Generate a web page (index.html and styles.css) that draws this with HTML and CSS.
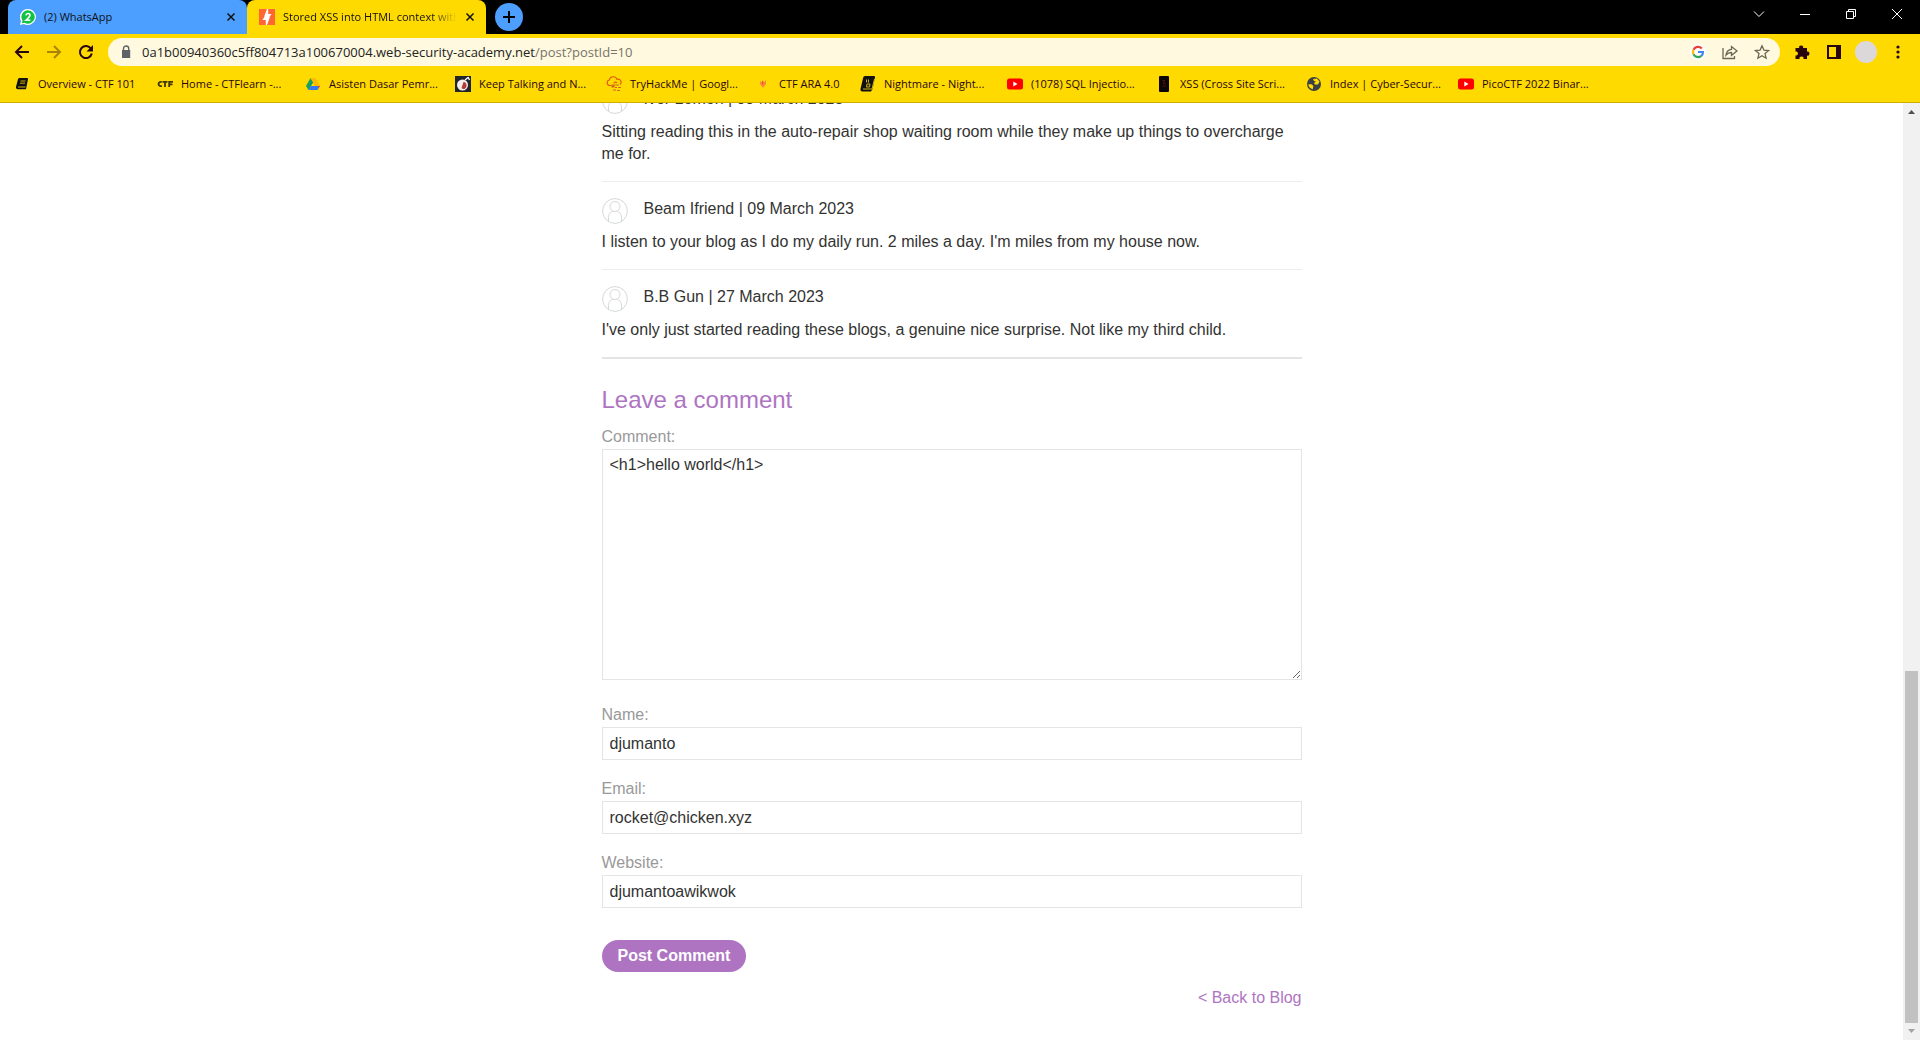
FILE: index.html
```html
<!DOCTYPE html>
<html lang="en">
<head>
<meta charset="utf-8">
<title>Stored XSS into HTML context with nothing encoded</title>
<link rel="stylesheet" href="styles.css">
</head>
<body>
<header class="chrome">
  <div class="tabstrip">
    <div class="tab tab-idle">
      <svg class="icon16" viewBox="0 0 16 16"><path d="M8 0a8 8 0 1 1-4 15L0 16l1-4A8 8 0 0 1 8 0z" fill="#fff"/><path d="M8 1.300a6.700 6.700 0 1 1-3.500 12.400L1.800 14.300l.7-2.700A6.700 6.700 0 0 1 8 1.300z" fill="#12c245"/><path d="M5.900 6.300Q6.100 4.500 8 4.500t2 1.800Q10 7.500 6 11.300h4.300" fill="none" stroke="#fff" stroke-width="1.600"/></svg>
      <span class="tab-title">(2) WhatsApp</span>
      <button class="tab-close" aria-label="Close tab"><svg viewBox="0 0 10 10"><path d="M1.500 1.500l7 7M8.500 1.500l-7 7"/></svg></button>
    </div>
    <div class="tab tab-active">
      <svg class="icon16" viewBox="0 0 16 16"><path d="M0 0h16v16H0z" fill="#ff6633"/><path d="M9.200 0v5h3.300L9 10.300V8.300H6L5.200 7.500 8 0zM6.800 16v-5H3.500L6.700 5.800 7 7.700h3l.8.8L8 16z" fill="#fff"/></svg>
      <span class="tab-title">Stored XSS into HTML context with</span>
      <button class="tab-close" aria-label="Close tab"><svg viewBox="0 0 10 10"><path d="M1.500 1.500l7 7M8.500 1.500l-7 7"/></svg></button>
    </div>
    <button class="new-tab" aria-label="New tab"><svg viewBox="0 0 12 12"><path d="M6 0v12M0 6h12"/></svg></button>
    <div class="window-buttons">
      <button aria-label="Search tabs"><svg viewBox="0 0 10 10"><path d="M0 2.500l5 5 5-5"/></svg></button>
      <button aria-label="Minimize"><svg viewBox="0 0 10 10"><path d="M0 5.500h10"/></svg></button>
      <button aria-label="Restore"><svg viewBox="0 0 10 10"><path d="M.5 2.500h7v7h-7zM2.500 2.500v-2h7v7h-2"/></svg></button>
      <button aria-label="Close"><svg viewBox="0 0 10 10"><path d="M0 0l10 10M10 0L0 10"/></svg></button>
    </div>
  </div>
  <div class="toolbar">
    <button class="tool" aria-label="Back"><svg class="icon16" viewBox="0 0 16 16"><path d="M15 8H2.500M8 2L2 8l6 6" class="ln"/></svg></button>
    <button class="tool tool-off" aria-label="Forward"><svg class="icon16" viewBox="0 0 16 16"><path d="M1 8h12.500M8 2l6 6-6 6" class="ln"/></svg></button>
    <button class="tool" aria-label="Reload"><svg class="icon16" viewBox="0 0 16 16"><path d="M13 4.800A6 6 0 1 0 13.800 9.500" class="ln"/><path d="M15 1v6.500H8.500z" fill="#28060f"/></svg></button>
    <div class="omnibox">
      <svg class="icon16" viewBox="0 0 16 16"><path d="M4 6h8.200v8H4z" fill="#5f6368"/><path d="M5.500 6.500V4.600a2.600 2.600 0 0 1 5.200 0v1.900" fill="none" stroke="#5f6368" stroke-width="1.400"/></svg>
      <span class="url">0a1b00940360c5ff804713a100670004.web-security-academy.net<span class="path">/post?postId=10</span></span>
      <button class="tool" aria-label="Google"><svg class="icon16" viewBox="0 0 16 16"><circle cx="8" cy="8" r="8" fill="#fff"/><g fill="none" stroke-width="2.200"><path d="M11.800 4.600A5 5 0 0 0 3.500 5.800" stroke="#ea4335"/><path d="M3.500 5.800a5 5 0 0 0 0 4.400" stroke="#fbbc05"/><path d="M3.500 10.200a5 5 0 0 0 7.800 1.600" stroke="#34a853"/><path d="M11.300 11.800A5 5 0 0 0 13 8H8" stroke="#4285f4"/></g></svg></button>
      <button class="tool" aria-label="Share"><svg class="icon16" viewBox="0 0 16 16"><path d="M1 4v10.500h11.500V12M4 11c.5-4 2.500-5.500 5.500-5.700V2.500L15 7l-5.500 4.300V8.500C7 8.500 5.500 9 4 11z" class="thin"/></svg></button>
      <button class="tool" aria-label="Bookmark"><svg class="icon16" viewBox="0 0 16 16"><path d="M8 1.800l1.900 4.300 4.700.4-3.600 3.100 1.100 4.600L8 11.700l-4.100 2.500L5 9.600 1.400 6.500l4.700-.4z" class="thin"/></svg></button>
    </div>
    <button class="tool" aria-label="Extensions"><svg class="icon16" viewBox="0 0 16 16"><path d="M1.500 4h3.700a2 2 0 1 1 3.900 0H13v3.700a2 2 0 1 1 0 3.900V15H9.500a2 2 0 1 0-3.900 0H1.500v-3.500a2 2 0 1 0 0-3.900z" fill="#28060f"/></svg></button>
    <button class="tool" aria-label="Side panel"><svg class="icon16" viewBox="0 0 16 16"><path d="M1 1h14v14H1zM3 3v10h7V3z" fill="#28060f" fill-rule="evenodd"/></svg></button>
    <button class="tool" aria-label="Profile"><span class="profile"></span></button>
    <button class="tool" aria-label="Menu"><svg class="icon16" viewBox="0 0 16 16"><g fill="#28060f"><circle cx="8" cy="3" r="1.600"/><circle cx="8" cy="8" r="1.600"/><circle cx="8" cy="13" r="1.600"/></g></svg></button>
  </div>
  <nav class="bookmarks">
    <a href="#"><svg class="icon16" viewBox="0 0 16 16"><path d="M5.500 2h7.800q1 0 .7 1l-2 10.300H4Q1.600 13.200 2 10.800L4 3.200Q4.400 2 5.500 2z" fill="#111"/><path d="M6.500 5h5M6 7.200h5M4 11h7.500" stroke="#ffda00" fill="none" stroke-width=".8"/></svg><span>Overview - CTF 101</span></a>
    <a href="#"><svg class="icon16" viewBox="0 0 16 16"><g fill="none" stroke="#40350b" stroke-width="1.800"><path d="M4.800 6.200A2.100 2.100 0 1 0 4.800 9.800M5.500 5.800h5M8 5.500v5.500M12.200 11V5.900H16M12 8.300h3.500"/></g></svg><span>Home - CTFlearn -...</span></a>
    <a href="#"><svg class="icon16" viewBox="0 0 16 16"><path d="M5.500 2L1 10l2.500 4 5-8z" fill="#15a05f"/><path d="M5.500 2h5L15 10h-5z" fill="#ffba00"/><path d="M3.500 14l2.300-4H15l-2.500 4z" fill="#3678f4"/><path d="M12.600 10H15l-1.200 2z" fill="#ea4335"/></svg><span>Asisten Dasar Pemr...</span></a>
    <a href="#"><svg class="icon16" viewBox="0 0 16 16"><path d="M0 0h16v16H0z" fill="#20242b"/><circle cx="7.500" cy="9" r="5.500" fill="#f2eeee"/><path d="M8.500 6a3 3.500 0 1 1-2 6z" fill="#b53b34"/><path d="M10 4l3-2.500M13 1l1.500 3" stroke="#fff" stroke-width="1.300"/></svg><span>Keep Talking and N...</span></a>
    <a href="#"><svg class="icon16" viewBox="0 0 16 16"><path d="M5 9.500H3.500a2.800 2.800 0 0 1-.2-5.500A4 4 0 0 1 11 3.400a3 3 0 0 1 3 5.100M11 7c-1-1.500-3-1-3 .5" fill="none" stroke="#df5a15" stroke-width="1.200"/><path d="M6 9h2v2H6zM9 9h4M9 11.500h2M12 11.500h3M7 14h3M11 14.500h3" stroke="#d26724" fill="#d26724" stroke-width="1.200"/></svg><span>TryHackMe | Googl...</span></a>
    <a href="#"><svg class="icon16" viewBox="0 0 16 16"><path d="M5 5l3 2 3-3v4L8 12 5 8z" fill="#ff8538"/><path d="M7 4l2 3-2 2z" fill="#e5543d"/></svg><span>CTF ARA 4.0</span></a>
    <a href="#"><svg class="icon16" viewBox="0 0 16 16"><path d="M5 0h9q1.500 0 1 1.500L12.500 13 11 15.500H2Q0 15 .5 13L3.200 1.500Q3.600 0 5 0z" fill="#111"/><path d="M3 13h9l2.500-10M6.500 3.500v3M8.500 3.500v3M7 8h3l-.5 3h-3z" fill="none" stroke="#e4c61c" stroke-width=".9"/></svg><span>Nightmare - Night...</span></a>
    <a href="#"><svg class="icon16" viewBox="0 0 16 16"><rect y="2.500" width="16" height="11" rx="2.500" fill="#f00"/><path d="M6.300 5.500l4.200 2.500-4.200 2.500z" fill="#fff"/></svg><span>(1078) SQL Injectio...</span></a>
    <a href="#"><svg class="icon16" viewBox="0 0 16 16"><rect x="3" width="10" height="16" rx="1" fill="#0b0505"/><path d="M6 4l3 1-2 2 3 1M6 10h4" stroke="#5b0f0f" fill="none"/></svg><span>XSS (Cross Site Scri...</span></a>
    <a href="#"><svg class="icon16" viewBox="0 0 16 16"><circle cx="8" cy="8" r="7" fill="#3b4045"/><path d="M2.300 8.300h3l2 1.500-.5 3.500Q2.800 12.300 2.300 8.300zM7 3l4-.5 2.500 3-1.500 3H9L8 7l2-1.500-2-.5z" fill="#ffda00"/></svg><span>Index | Cyber-Secur...</span></a>
    <a href="#"><svg class="icon16" viewBox="0 0 16 16"><rect y="2.500" width="16" height="11" rx="2.500" fill="#f00"/><path d="M6.300 5.500l4.200 2.500-4.200 2.500z" fill="#fff"/></svg><span>PicoCTF 2022 Binar...</span></a>
  </nav>
</header>
<div class="viewport">
  <main class="page">
    <div class="content">
      <section class="comment">
        <p class="author"><svg class="avatar" viewBox="0 0 26 26"><circle cx="13" cy="13" r="12.400"/><circle cx="13" cy="8.500" r="5"/><path d="M6.500 24v-4.500c0-3.500 2-5.500 4-6.200M19.500 24v-4.500c0-3.500-2-5.500-4-6.200"/></svg>Ivor Lemon | 09 March 2023</p>
        <p>Sitting reading this in the auto-repair shop waiting room while they make up things to overcharge me for.</p>
      </section>
      <section class="comment">
        <p class="author"><svg class="avatar" viewBox="0 0 26 26"><circle cx="13" cy="13" r="12.400"/><circle cx="13" cy="8.500" r="5"/><path d="M6.500 24v-4.500c0-3.500 2-5.500 4-6.200M19.500 24v-4.500c0-3.500-2-5.500-4-6.200"/></svg>Beam Ifriend | 09 March 2023</p>
        <p>I listen to your blog as I do my daily run. 2 miles a day. I'm miles from my house now.</p>
      </section>
      <section class="comment">
        <p class="author"><svg class="avatar" viewBox="0 0 26 26"><circle cx="13" cy="13" r="12.400"/><circle cx="13" cy="8.500" r="5"/><path d="M6.500 24v-4.500c0-3.500 2-5.500 4-6.200M19.500 24v-4.500c0-3.500-2-5.500-4-6.200"/></svg>B.B Gun | 27 March 2023</p>
        <p>I've only just started reading these blogs, a genuine nice surprise. Not like my third child.</p>
      </section>
      <form class="comment-form">
        <h2>Leave a comment</h2>
        <label for="comment">Comment:</label>
        <textarea id="comment">&lt;h1&gt;hello world&lt;/h1&gt;</textarea>
        <label for="name">Name:</label>
        <input id="name" type="text" value="djumanto">
        <label for="email">Email:</label>
        <input id="email" type="email" value="rocket@chicken.xyz">
        <label for="website">Website:</label>
        <input id="website" type="text" value="djumantoawikwok">
        <button class="post" type="button">Post Comment</button>
      </form>
      <div class="back"><a href="#">&lt; Back to Blog</a></div>
    </div>
  </main>
  <div class="scrollbar">
    <svg viewBox="0 0 17 17"><path d="M5 11h7L8.500 7z" fill="#505050"/></svg>
    <div class="track"><div class="thumb"></div></div>
    <svg viewBox="0 0 17 17"><path d="M5 6h7l-3.500 4z" fill="#a3a3a3"/></svg>
  </div>
</div>
</body>
</html>
```
FILE: styles.css
```css
* { box-sizing: border-box; }
body {
  margin: 0;
  height: 100vh;
  display: flex;
  flex-direction: column;
  overflow: hidden;
  background: #fff;
  color: #333332;
  font: 16px/22px "Liberation Sans", Arial, sans-serif;
}
button { border: 0; padding: 0; background: none; font: inherit; color: inherit; }
svg { display: block; flex: none; }
.icon16 { width: 16px; height: 16px; flex: none; }

/* Browser frame */
.chrome {
  flex: none;
  background: #ffda00;
  border-bottom: 1px solid #ccae00;
  color: #28060f;
  font: 11px/16px "Open Sans", "Noto Sans", sans-serif;
}
.tabstrip { display: flex; height: 34px; padding-left: 8px; background: #000; }
.tab {
  display: flex;
  align-items: center;
  width: 239px;
  gap: 8px;
  padding: 0 11px 0 12px;
  border-radius: 8px 8px 0 0;
  color: #111;
}
.tab-idle { background: #4c9eff; }
.tab-active { background: #ffda00; }
.tab-title { flex: 1; overflow: hidden; white-space: nowrap; }
.tab-active .tab-title { mask-image: linear-gradient(to right, #000 85%, transparent); }
.tab-close { width: 10px; height: 10px; }
.tab-close path { stroke: #111; stroke-width: 1.500; fill: none; }
.new-tab {
  display: grid;
  place-items: center;
  align-self: center;
  width: 28px;
  height: 28px;
  margin-left: 9px;
  border-radius: 50%;
  background: #4c9eff;
}
.new-tab svg { width: 12px; height: 12px; }
.new-tab path { stroke: #000; stroke-width: 2; }
.window-buttons { display: flex; margin-left: auto; height: 28px; }
.window-buttons button { display: grid; place-items: center; width: 46px; }
.window-buttons svg { width: 10px; height: 10px; overflow: visible; }
.window-buttons path { stroke: #fff; fill: none; }

.toolbar { display: flex; align-items: center; height: 36px; padding: 0 6px; }
.tool { display: grid; place-items: center; width: 32px; height: 28px; }
.tool-off { opacity: .4; }
.ln { fill: none; stroke: #28060f; stroke-width: 2; }
.thin { fill: none; stroke: #696755; stroke-width: 1.300; }
.omnibox {
  flex: 1;
  display: flex;
  align-items: center;
  height: 28px;
  margin: 0 6px;
  padding: 0 2px 0 10px;
  border-radius: 14px;
  background: #fff9df;
}
.url { flex: 1; margin-left: 8px; font-size: 13px; line-height: 20px; color: #222; }
.path { color: #77746a; }
.profile { width: 22px; height: 22px; border-radius: 50%; background: #dcd8d9; }

.bookmarks {
  display: grid;
  grid-template-columns: 143px 148px 150px 151px 149px 105px 147px 149px 150px 152px 150px;
  height: 32px;
  padding: 0 14px 4px;
}
.bookmarks a {
  display: flex;
  align-items: center;
  gap: 8px;
  color: #28060f;
  text-decoration: none;
  white-space: nowrap;
}

/* Page area */
.viewport { flex: 1; display: flex; min-height: 0; }
.page { flex: 1; overflow: hidden; }
.content { width: 700px; max-width: 100%; margin: -32px auto 0; }
.comment { border-top: 1px solid #ececeb; padding: 16px 0; }
.comment p { margin: 0; }
.comment .author {
  display: flex;
  gap: 16px;
  height: 26px;
  margin-bottom: 7px;
}
.avatar { width: 26px; height: 26px; fill: none; stroke: #d5d8d8; }

.comment-form { border-top: 2px solid #e4e4e4; padding-top: 26px; }
.comment-form h2 {
  margin: 0 0 11px;
  font-size: 24px;
  line-height: 30px;
  font-weight: 400;
  color: #ae74c2;
}
.comment-form label { display: block; line-height: 22px; margin-bottom: 1px; color: #999; }
.comment-form input,
.comment-form textarea {
  display: block;
  width: 100%;
  margin: 0 0 18px;
  padding: 4px 7px;
  border: 1px solid #e4e4e4;
  border-radius: 0;
  background: #fff;
  color: #333332;
  font: inherit;
  outline: 0;
}
.comment-form input { height: 33px; }
.comment-form textarea { height: 231px; margin-bottom: 24px; resize: both; }
.post {
  height: 32px;
  margin-top: 14px;
  padding: 0 16px;
  border-radius: 16px;
  background: #ae74c2;
  color: #fff;
  font-weight: 700;
}
.back { margin-top: 15px; text-align: right; }
.back a { color: #ae74c2; text-decoration: none; }

.scrollbar { display: flex; flex-direction: column; width: 17px; background: #f1f1f1; }
.scrollbar svg { width: 17px; height: 17px; }
.track { flex: 1; display: flex; align-items: flex-end; padding: 0 2px; }
.thumb { width: 100%; height: 39%; background: #c1c1c1; }
```
